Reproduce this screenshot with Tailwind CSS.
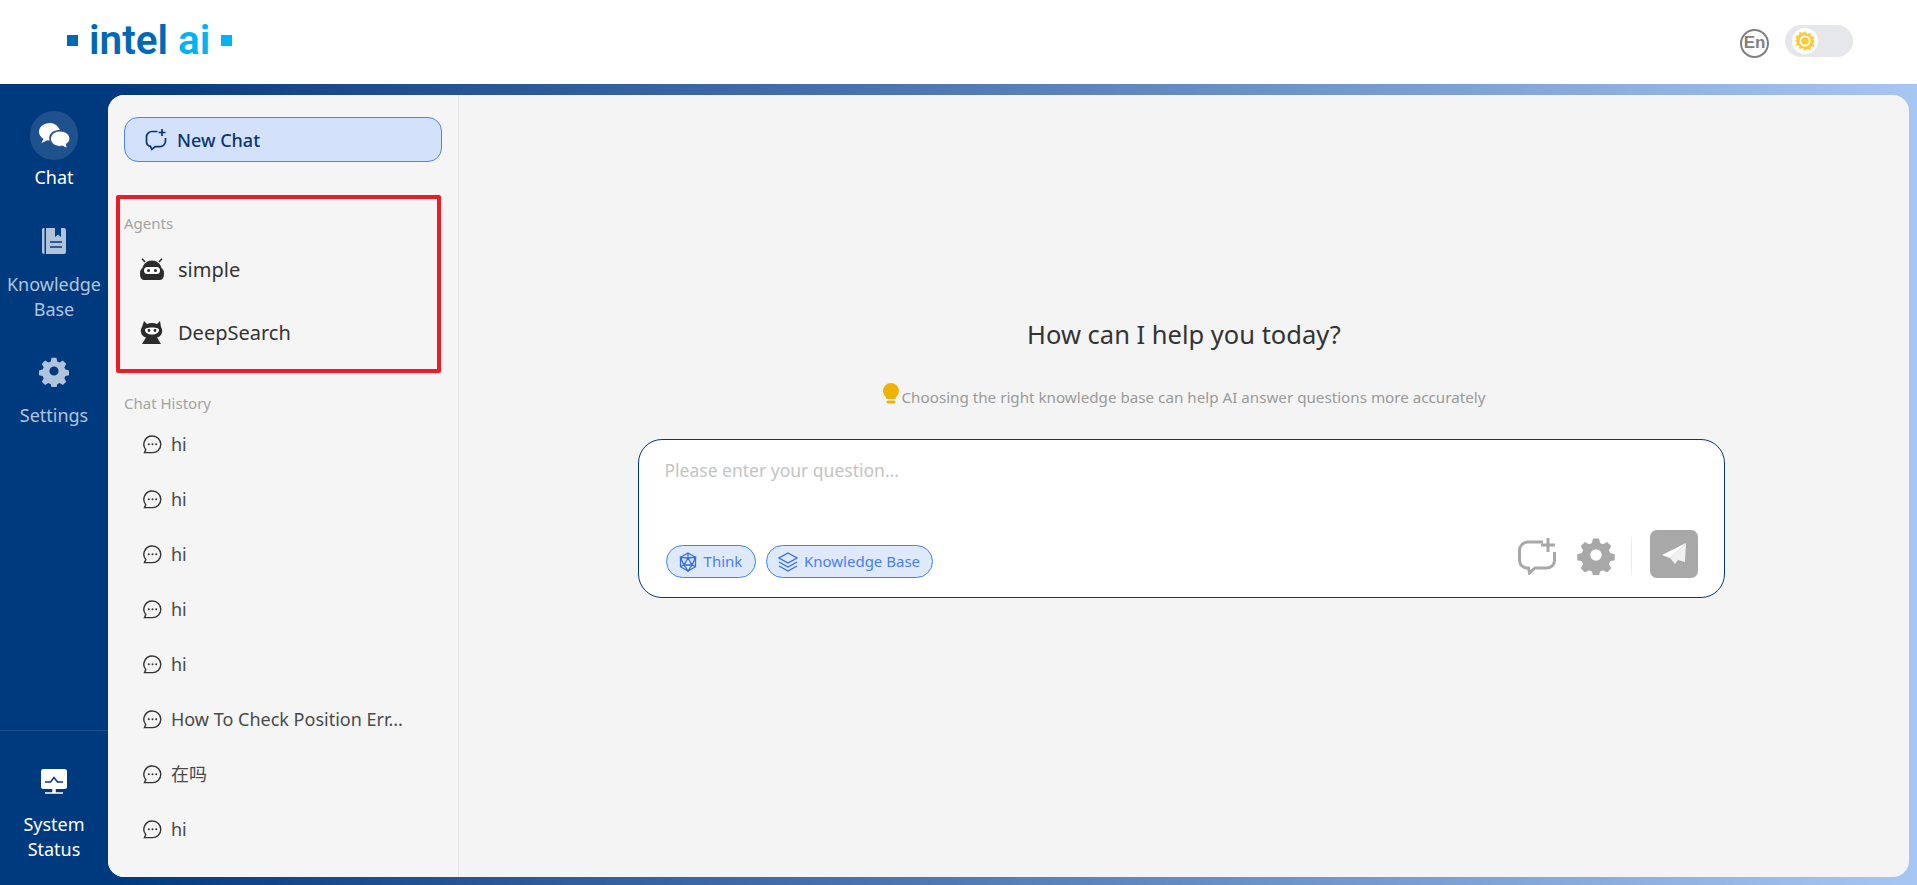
<!doctype html>
<html lang="en">
<head>
<meta charset="utf-8">
<title>intel ai</title>
<script src="https://cdn.jsdelivr.net/npm/@tailwindcss/browser@4"></script>
</head>
<body class="m-0">
<div class="w-[1917px] h-[885px] overflow-hidden flex flex-col bg-white text-[#333] font-['Noto_Sans','Noto_Sans_CJK_SC',sans-serif]">
  <header class="h-[84px] shrink-0 flex items-center justify-between bg-white pl-[67px] pr-[64px]">
    <div class="flex items-center font-['Roboto',sans-serif] font-semibold text-[40.500px] leading-none -mt-[3px]">
      <span class="w-[11px] h-[11px] bg-[#0068b5]"></span>
      <span class="ml-[11px] text-[#0068b5]">intel</span>
      <span class="ml-[10px] text-[#00b4f0]">ai</span>
      <span class="ml-[11px] w-[11px] h-[11px] bg-[#00b4f0]"></span>
    </div>
    <div class="flex items-center gap-[16px] -mt-[2px]">
      <span class="w-[29px] h-[29px] mt-[4px] rounded-full border-2 border-[#808080] flex items-center justify-center text-[17px] font-bold text-[#808080] font-['Liberation_Sans',sans-serif]">En</span>
      <span class="w-[68px] h-[32px] rounded-full bg-[#e5e7eb] flex items-center pl-[7px]">
        <span class="w-[26px] h-[26px] rounded-full bg-white flex items-center justify-center">
          <svg class="w-[20px] h-[20px]" viewBox="0 0 20 20"><path fill="#fdc93c" d="M10 0l2.200 2.900 3.400-1.200.2 3.600 3.600.4-1.200 3.400L20 10l-1.800 1.900 1.200 3.400-3.600.4-.2 3.600-3.400-1.200L10 20l-2.200-2.900-3.400 1.200-.2-3.600-3.600-.4 1.200-3.400L0 10l1.800-1.900-1.200-3.400 3.600-.4.200-3.600 3.400 1.200z"/><circle cx="10" cy="10" r="5.500" fill="#fff"/><circle cx="10" cy="10" r="3.800" fill="#fdc93c"/></svg>
        </span>
      </span>
    </div>
  </header>

  <div class="flex-1 min-h-0 flex bg-linear-to-r from-[#003a7e] from-[6%] to-[#a8c6f2] pt-[11px] pb-[8px] pr-[8px]">
    <nav class="w-[108px] shrink-0 -mt-[11px] -mb-[8px] pt-[27px] bg-[#003a7e] flex flex-col items-center text-[18px] leading-[25px] text-center text-white">
      <div class="flex flex-col items-center">
        <span class="w-[48px] h-[49px] rounded-full bg-white/12 flex items-center justify-center">
          <svg class="w-[32px] h-[28px]" viewBox="0 0 32 28"><path fill="#fff" d="M12 1C5.900 1 1 4.900 1 9.800c0 3 1.800 5.500 4.500 7.100L3.300 21l6.200-2.800c.7.1 1.300.2 2 .2C10 12 15 8 21.900 8c-1.700-4-5.400-7-9.900-7z"/><path fill="#fff" stroke="#23538f" stroke-width="1" d="M22 9c-5.300 0-9.500 3.400-9.500 7.700s4.200 7.700 9.500 7.700c.9 0 1.700-.1 2.500-.3l4.600 2.400-.6-4.600c2-1.400 3.400-3.100 3.400-5.200C31.900 12.400 27.300 9 22 9z"/></svg>
        </span>
        <span class="mt-[5px]">Chat</span>
      </div>
      <div class="mt-[37px] flex flex-col items-center text-[#b0c4de]">
        <svg class="w-[26px] h-[28px]" viewBox="0 0 26 28"><path fill="#b0c4de" d="M1 2a2 2 0 0 1 2-1h.5v26H3a2 2 0 0 1-2-2zM5 1h9v9l3-2.500L20 10V1h3a2 2 0 0 1 2 2v22a2 2 0 0 1-2 2H5z"/><path stroke="#003a7e" stroke-width="1.300" d="M9 15h12M9 20h12"/></svg>
        <span class="mt-[17px] w-[100px]">Knowledge Base</span>
      </div>
      <div class="mt-[33px] flex flex-col items-center text-[#b0c4de]">
        <svg class="w-[32px] h-[32px]" viewBox="0 0 24 24"><path fill="#b0c4de" fill-rule="evenodd" d="M10 1h4l.7 3 2 .9 2.700-1.600 2.800 2.800-1.600 2.700.9 2 3 .7v4l-3 .7-.9 2 1.600 2.700-2.800 2.800-2.700-1.600-2 .9-.7 3h-4l-.7-3-2-.9-2.700 1.600-2.800-2.800 1.600-2.700-.9-2-3-.7v-4l3-.7.9-2-1.600-2.700 2.800-2.800 2.700 1.600 2-.9zM12 8.200a3.800 3.800 0 1 0 0 7.600 3.800 3.800 0 0 0 0-7.600z" transform="translate(1.200 1.200) scale(.9)"/></svg>
        <span class="mt-[16px]">Settings</span>
      </div>
      <div class="mt-auto w-full border-t border-white/10 pt-[38px] pb-[23px] flex flex-col items-center">
        <svg class="w-[28px] h-[26px]" viewBox="0 0 28 26"><rect x="1" y="0" width="26" height="20" rx="2.500" fill="#fff"/><path d="M5 13h5.500l3.500-4.500 3.500 4.500H23" fill="none" stroke="#003a7e" stroke-width="1.500"/><path d="M13 20h2v3h-2zM5 24h18" stroke="#fff" stroke-width="1.500" fill="#fff"/></svg>
        <span class="mt-[17px] w-[80px]">System Status</span>
      </div>
    </nav>

    <main class="flex-1 min-w-0 flex rounded-[16px] bg-[#f4f4f4] overflow-hidden">
      <aside class="w-[351px] shrink-0 bg-[#f5f5f5] border-r border-[#e5e5e5] pt-[22px] px-[16px] flex flex-col">
        <button class="w-[318px] h-[45px] rounded-[14px] border border-[#4a85e8] bg-[#d3e1fb] flex items-center pl-[20px] gap-[10px] text-[18px] font-medium text-[#0a3478]">
          <svg class="w-[22px] h-[23px]" viewBox="0 0 22 23" fill="none" stroke="#0a3478" stroke-width="1.700"><path d="M12.500 3.500H7a5.500 5.500 0 0 0-5.500 5.500v4.500A5 5 0 0 0 5.500 18.400l1.300 3 3.400-2.800H15a5.500 5.500 0 0 0 5.500-5.500v-3"/><path d="M17 1v7M13.500 4.500h7"/></svg>
          <span class="mt-[1px]">New Chat</span>
        </button>

        <section class="-ml-[8px] mt-[33px] w-[325px] h-[178px] border-[4px] border-[#ed1c24] rounded-[2px] pl-[4px] pt-[14px]">
          <h2 class="text-[15px] leading-[20px] font-normal text-[#a3a3a3]">Agents</h2>
          <div class="mt-[6px] h-[62px] flex items-center pl-[15px] gap-[13px] text-[20px]">
            <svg class="w-[26px] h-[24px]" viewBox="0 0 26 24"><path d="M6 4L3 0.800M20 4l3-3.200" stroke="#2b2b2b" stroke-width="1.500"/><path fill="#2b2b2b" d="M13 2.500c-5 0-8.500 3.200-9.500 7.500C1.700 11 1 13 1 15.500 1 19 2 22 5 22h16c3 0 4-3 4-6.500 0-2.500-.7-4.500-2.500-5.500-1-4.300-4.500-7.500-9.500-7.500z"/><rect x="5" y="9" width="16" height="7" rx="3.500" fill="#fff"/><circle cx="9.500" cy="12.500" r="1.500" fill="#2b2b2b"/><circle cx="16.500" cy="12.500" r="1.500" fill="#2b2b2b"/></svg>
            simple
          </div>
          <div class="h-[63px] flex items-center pl-[15px] gap-[13px] text-[20px]">
            <svg class="w-[26px] h-[25px]" viewBox="0 0 26 25"><path fill="#2b2b2b" d="M5 1l3 3c3-1.300 7-1.300 10 0l3-3 1 6c1.500 2 1.500 5 .5 7-1 1.800-2.500 3-4.500 3.600l4 6.400H3l4-6.400C5 17 3.500 15.800 2.500 14c-1-2-1-5 .5-7z"/><path fill="#fff" d="M6 10c0-1.500 2-2.500 7-2.500s7 1 7 2.500c0 2.500-3 4.500-7 4.500S6 12.500 6 10z"/><circle cx="10" cy="10.500" r="1.400" fill="#2b2b2b"/><circle cx="16" cy="10.500" r="1.400" fill="#2b2b2b"/></svg>
            DeepSearch
          </div>
        </section>
        <div class="w-[318px] border-t border-[#ebebeb] mt-[1px]"></div>

        <h2 class="mt-[18px] text-[15px] leading-[20px] font-normal text-[#a3a3a3]">Chat History</h2>
        <ul class="mt-[4px] text-[18px] text-[#4a4a4a]">
          <li class="h-[55px] flex items-center pl-[19px] gap-[9px]"><svg class="w-[19px] h-[19px]" viewBox="0 0 19 19" fill="none"><path stroke="#333" stroke-width="1.400" d="M9.500 1a8.300 8.300 0 0 1 0 16.600H1.500l1.300-3A8.300 8.300 0 0 1 9.500 1z"/><circle cx="5.800" cy="9.300" r="1" fill="#333"/><circle cx="9.500" cy="9.300" r="1" fill="#333"/><circle cx="13.200" cy="9.300" r="1" fill="#333"/></svg>hi</li>
          <li class="h-[55px] flex items-center pl-[19px] gap-[9px]"><svg class="w-[19px] h-[19px]" viewBox="0 0 19 19" fill="none"><path stroke="#333" stroke-width="1.400" d="M9.500 1a8.300 8.300 0 0 1 0 16.600H1.500l1.300-3A8.300 8.300 0 0 1 9.500 1z"/><circle cx="5.800" cy="9.300" r="1" fill="#333"/><circle cx="9.500" cy="9.300" r="1" fill="#333"/><circle cx="13.200" cy="9.300" r="1" fill="#333"/></svg>hi</li>
          <li class="h-[55px] flex items-center pl-[19px] gap-[9px]"><svg class="w-[19px] h-[19px]" viewBox="0 0 19 19" fill="none"><path stroke="#333" stroke-width="1.400" d="M9.500 1a8.300 8.300 0 0 1 0 16.600H1.500l1.300-3A8.300 8.300 0 0 1 9.500 1z"/><circle cx="5.800" cy="9.300" r="1" fill="#333"/><circle cx="9.500" cy="9.300" r="1" fill="#333"/><circle cx="13.200" cy="9.300" r="1" fill="#333"/></svg>hi</li>
          <li class="h-[55px] flex items-center pl-[19px] gap-[9px]"><svg class="w-[19px] h-[19px]" viewBox="0 0 19 19" fill="none"><path stroke="#333" stroke-width="1.400" d="M9.500 1a8.300 8.300 0 0 1 0 16.600H1.500l1.300-3A8.300 8.300 0 0 1 9.500 1z"/><circle cx="5.800" cy="9.300" r="1" fill="#333"/><circle cx="9.500" cy="9.300" r="1" fill="#333"/><circle cx="13.200" cy="9.300" r="1" fill="#333"/></svg>hi</li>
          <li class="h-[55px] flex items-center pl-[19px] gap-[9px]"><svg class="w-[19px] h-[19px]" viewBox="0 0 19 19" fill="none"><path stroke="#333" stroke-width="1.400" d="M9.500 1a8.300 8.300 0 0 1 0 16.600H1.500l1.300-3A8.300 8.300 0 0 1 9.500 1z"/><circle cx="5.800" cy="9.300" r="1" fill="#333"/><circle cx="9.500" cy="9.300" r="1" fill="#333"/><circle cx="13.200" cy="9.300" r="1" fill="#333"/></svg>hi</li>
          <li class="h-[55px] flex items-center pl-[19px] gap-[9px]"><svg class="w-[19px] h-[19px]" viewBox="0 0 19 19" fill="none"><path stroke="#333" stroke-width="1.400" d="M9.500 1a8.300 8.300 0 0 1 0 16.600H1.500l1.300-3A8.300 8.300 0 0 1 9.500 1z"/><circle cx="5.800" cy="9.300" r="1" fill="#333"/><circle cx="9.500" cy="9.300" r="1" fill="#333"/><circle cx="13.200" cy="9.300" r="1" fill="#333"/></svg>How To Check Position Err...</li>
          <li class="h-[55px] flex items-center pl-[19px] gap-[9px]"><svg class="w-[19px] h-[19px]" viewBox="0 0 19 19" fill="none"><path stroke="#333" stroke-width="1.400" d="M9.500 1a8.300 8.300 0 0 1 0 16.600H1.500l1.300-3A8.300 8.300 0 0 1 9.500 1z"/><circle cx="5.800" cy="9.300" r="1" fill="#333"/><circle cx="9.500" cy="9.300" r="1" fill="#333"/><circle cx="13.200" cy="9.300" r="1" fill="#333"/></svg>在吗</li>
          <li class="h-[55px] flex items-center pl-[19px] gap-[9px]"><svg class="w-[19px] h-[19px]" viewBox="0 0 19 19" fill="none"><path stroke="#333" stroke-width="1.400" d="M9.500 1a8.300 8.300 0 0 1 0 16.600H1.500l1.300-3A8.300 8.300 0 0 1 9.500 1z"/><circle cx="5.800" cy="9.300" r="1" fill="#333"/><circle cx="9.500" cy="9.300" r="1" fill="#333"/><circle cx="13.200" cy="9.300" r="1" fill="#333"/></svg>hi</li>
        </ul>
      </aside>

      <section class="flex-1 min-w-0 flex flex-col items-center pt-[220px]">
        <h1 class="text-[25.500px] leading-[38px] font-normal text-[#333]">How can I help you today?</h1>
        <p class="mt-[28px] h-[32px] flex items-center text-[15.200px] text-[#9a9a9a]">
          <svg class="w-[16px] h-[22px] mr-[3px] -mt-[6px]" viewBox="0 0 16 22"><path fill="#eeb308" d="M8 0a8 8 0 0 1 8 8c0 3-1.800 4.500-3 6.500l-.5 1.500h-9L3 14.500C1.800 12.500 0 11 0 8a8 8 0 0 1 8-8z"/><rect x="3.500" y="17.500" width="9" height="3" rx="1.500" fill="#eeb308"/></svg>
          Choosing the right knowledge base can help AI answer questions more accurately
        </p>
        <div class="mt-[26px] mr-[6px] w-[1087px] h-[159px] rounded-[24px] border border-[#003a80] bg-white flex flex-col px-[26px] pt-[15px] pb-[19px]">
          <div class="text-[17.500px] leading-[30px] text-[#c4c4c4]">Please enter your question...</div>
          <div class="mt-auto flex items-end justify-between">
            <div class="flex items-center gap-[10px] ml-[1px]">
              <span class="h-[33px] w-[90px] rounded-full border border-[#3b82f6] bg-[#dfe9fc] flex items-center justify-center gap-[7px] text-[15px] text-[#4a7df5]">
                <svg class="w-[18px] h-[20px]" viewBox="0 0 18 20" fill="none" stroke="#2f6bf0" stroke-width="1.300"><path d="M9 1l7.500 4.300v9.400L9 19l-7.500-4.300V5.300z"/><path d="M9 1v5M1.500 5.300L9 6l7.500-.7L13 13H5zM5 13l4-7 4 7-4 6zM1.500 14.700L5 13M16.500 14.700L13 13"/></svg>
                Think
              </span>
              <span class="h-[33px] w-[167px] rounded-full border border-[#3b82f6] bg-[#dfe9fc] flex items-center justify-center gap-[6px] text-[15px] text-[#4a7df5]">
                <svg class="w-[20px] h-[20px]" viewBox="0 0 20 20" fill="none" stroke="#2f6bf0" stroke-width="1.200"><path d="M10 1l9 5-9 5-9-5z"/><path d="M1 10l9 5 9-5M1 14l9 5 9-5"/></svg>
                Knowledge Base
              </span>
            </div>
            <div class="flex items-end">
              <svg class="w-[38px] h-[38px] mb-[3px]" viewBox="0 0 38 38" fill="none" stroke="#a8a8a8" stroke-width="3"><path d="M25 5H10a8.500 8.500 0 0 0-8.500 8.500v10A7.500 7.500 0 0 0 9 31h1.500l1 5 5.500-5h12a7.500 7.500 0 0 0 7.500-7.500V15"/><path d="M30 1v14M23 8h14"/></svg>
              <svg class="w-[40px] h-[40px] ml-[20px] mb-[3px]" viewBox="0 0 24 24"><path fill="#a8a8a8" fill-rule="evenodd" d="M10 1h4l.7 3 2 .9 2.700-1.600 2.800 2.800-1.600 2.700.9 2 3 .7v4l-3 .7-.9 2 1.600 2.700-2.800 2.800-2.700-1.600-2 .9-.7 3h-4l-.7-3-2-.9-2.700 1.600-2.800-2.800 1.600-2.700-.9-2-3-.7v-4l3-.7.9-2-1.600-2.700 2.800-2.800 2.700 1.600 2-.9zM12 8.200a3.800 3.800 0 1 0 0 7.600 3.800 3.800 0 0 0 0-7.600z" transform="translate(1.200 1.200) scale(.9)"/></svg>
              <span class="w-px h-[38px] bg-[#ececec] ml-[15px] mb-[3px]"></span>
              <span class="w-[48px] h-[48px] ml-[18px] rounded-[7px] bg-[#a8a8a8] flex items-center justify-center">
                <svg class="w-[26px] h-[24px]" viewBox="0 0 26 24"><path fill="#fff" d="M25 1L1 13l8 3z"/><path fill="#f0f0f0" d="M25 1L9 16l5 6 3-4 7 2z"/></svg>
              </span>
            </div>
          </div>
        </div>
      </section>
    </main>
  </div>
</div>
</body>
</html>
